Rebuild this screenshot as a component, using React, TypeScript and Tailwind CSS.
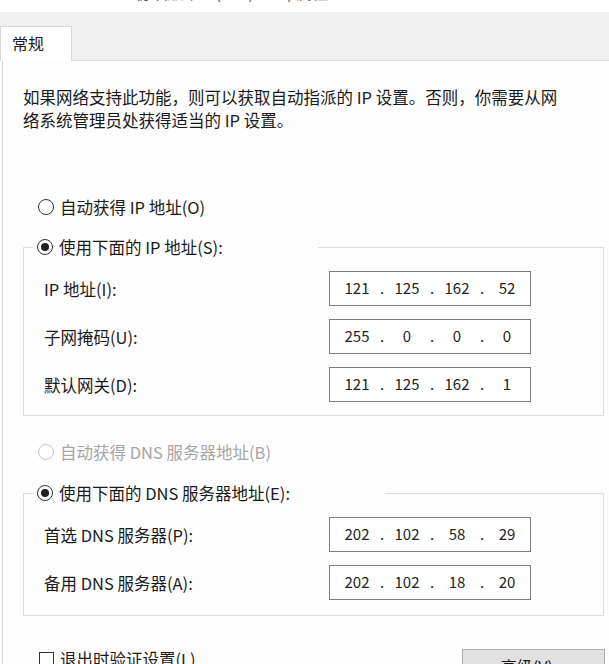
import { Fragment } from "react";

function Radio({
	checked,
	disabled,
	label,
}: {
	checked?: boolean;
	disabled?: boolean;
	label: string;
}) {
	return (
		<div className="flex h-[20px] items-center">
			<span
				className={`flex h-[16px] w-[16px] items-center justify-center rounded-full border bg-white ${
					disabled ? "border-[#c4c4c4]" : "border-[#333333]"
				}`}
			>
				{checked && (
					<span className="h-[8px] w-[8px] rounded-full bg-[#222222]" />
				)}
			</span>
			<span
				className={`ml-[6px] leading-[20px] ${disabled ? "text-[#a6a6a6]" : ""}`}
			>
				{label}
			</span>
		</div>
	);
}

function IpField({ parts }: { parts: string[] }) {
	return (
		<div className="flex h-[35px] w-[202px] items-center border border-[#7d7d7d] bg-white pl-[6px] text-[15px] text-[#222222]">
			{parts.map((p, i) => (
				<Fragment key={`${i}-${p}`}>
					{i > 0 && <span className="w-[8px] text-center">.</span>}
					<span className="w-[42px] text-center">{p}</span>
				</Fragment>
			))}
		</div>
	);
}

function FieldRow({ label, parts }: { label: string; parts: string[] }) {
	return (
		<div className="flex h-[35px] items-center">
			<span className="w-[285px] leading-[20px]">{label}</span>
			<IpField parts={parts} />
		</div>
	);
}

function Group({
	legend,
	legendWidth,
	bottom,
	rows,
}: {
	legend: string;
	legendWidth: string;
	bottom: string;
	rows: { label: string; parts: string[] }[];
}) {
	return (
		<fieldset
			className={`w-[581px] border border-[#dcdcdc] bg-[#fdfdfd] px-0 ${bottom}`}
		>
			<legend className={`ml-[9px] px-[4px] ${legendWidth}`}>
				<Radio checked label={legend} />
			</legend>
			<div className="flex flex-col gap-[13px] pt-[14px] pl-[20px]">
				{rows.map((r) => (
					<FieldRow key={r.label} label={r.label} parts={r.parts} />
				))}
			</div>
		</fieldset>
	);
}

export default function App() {
	return (
		<div className="flex h-[664px] w-[609px] flex-col overflow-hidden bg-white font-['Noto_Sans_CJK_SC',sans-serif] text-[16.5px] text-[#1a1a1a]">
			{/* window title, mostly scrolled off */}
			<div className="h-[12px] shrink-0 overflow-hidden pl-[72px]">
				<div className="-mt-[18px] text-[16px] leading-[20px] text-[#555555]">
					Internet 协议版本 4 (TCP/IPv4) 属性
				</div>
			</div>

			{/* tab strip */}
			<div className="flex h-[49px] shrink-0 items-end border-b border-[#dddddd] bg-[#f0f0f0]">
				<div className="-mb-px flex h-[35px] w-[72px] items-center border border-b-0 border-[#d9d9d9] bg-white pb-[3px] pl-[11px] text-[16px]">
					常规
				</div>
			</div>

			{/* tab page */}
			<div className="ml-[2px] flex shrink-0 grow flex-col border-l border-[#d4d4d4] bg-[#fdfdfd] pt-[25px] pl-[20px]">
				<p className="leading-[23px]">
					如果网络支持此功能，则可以获取自动指派的 IP 设置。否则，你需要从网
					<br />
					络系统管理员处获得适当的 IP 设置。
				</p>

				<div className="mt-[65px] pl-[15px]">
					<Radio label="自动获得 IP 地址(O)" />
				</div>

				<div className="mt-[20px]">
					<Group
						legend="使用下面的 IP 地址(S):"
						legendWidth="w-[285px]"
						bottom="pb-[13px]"
						rows={[
							{ label: "IP 地址(I):", parts: ["121", "125", "162", "52"] },
							{ label: "子网掩码(U):", parts: ["255", "0", "0", "0"] },
							{ label: "默认网关(D):", parts: ["121", "125", "162", "1"] },
						]}
					/>
				</div>

				<div className="mt-[26px] pl-[15px]">
					<Radio disabled label="自动获得 DNS 服务器地址(B)" />
				</div>

				<div className="mt-[21px]">
					<Group
						legend="使用下面的 DNS 服务器地址(E):"
						legendWidth="w-[352px]"
						bottom="pb-[15px]"
						rows={[
							{
								label: "首选 DNS 服务器(P):",
								parts: ["202", "102", "58", "29"],
							},
							{
								label: "备用 DNS 服务器(A):",
								parts: ["202", "102", "18", "20"],
							},
						]}
					/>
				</div>

				<div className="mt-[33px] flex items-start justify-between pr-[4px]">
					<div className="flex h-[20px] items-center pl-[16px]">
						<span className="h-[15px] w-[15px] border border-[#333333] bg-white" />
						<span className="ml-[6px] leading-[20px]">退出时验证设置(L)</span>
					</div>
					<button
						type="button"
						className="h-[34px] w-[143px] border border-[#adadad] bg-[#e1e1e1] text-[16px] text-[#1a1a1a]"
					>
						高级(V)...
					</button>
				</div>
			</div>
		</div>
	);
}
